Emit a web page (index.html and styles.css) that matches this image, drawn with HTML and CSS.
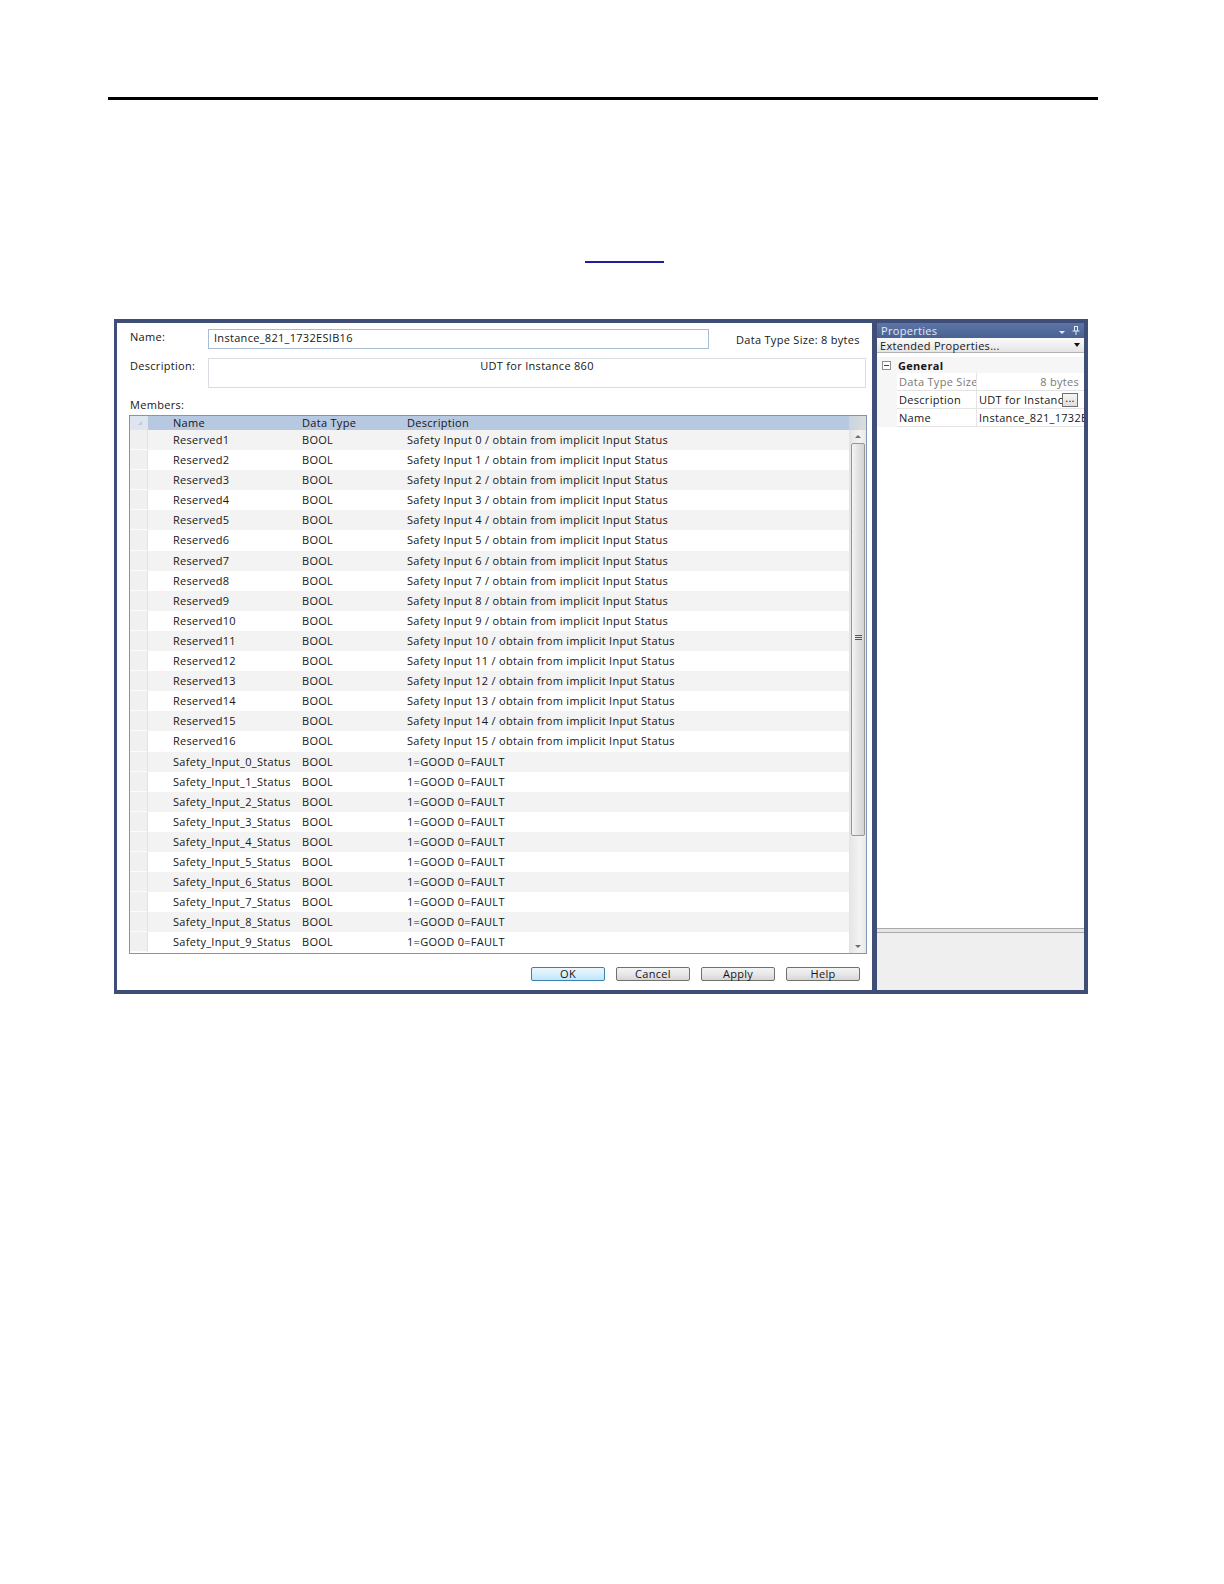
FILE: index.html
```html
<!DOCTYPE html>
<html lang="en">
<head>
    <meta charset="UTF-8">
    <title>Data Type: Instance_821_1732ESIB16</title>
    <link rel="stylesheet" href="styles.css">
</head>
<body>

<div class="top-rule"></div>
<a class="xref" href="#"></a>

<div class="dialog">
    <div class="editor">
        <div class="field-row name-row">
            <label class="field-label">Name:</label>
            <div class="text-box name-box">Instance_821_1732ESIB16</div>
            <span class="type-size">Data Type Size: 8 bytes</span>
        </div>

        <div class="field-row desc-row">
            <label class="field-label">Description:</label>
            <div class="text-box desc-box">UDT for Instance 860</div>
        </div>

        <div class="members-label">Members:</div>

        <div class="members">
            <div class="members-head">
                <div class="row-head"><span class="sort-mark"></span></div>
                <div class="col-name">Name</div>
                <div class="col-type">Data Type</div>
                <div class="col-desc">Description</div>
                <div class="head-corner"></div>
            </div>
            <div class="members-body">
                <div class="rows">
                    <div class="row"><div class="row-head"></div><div class="col-name">Reserved1</div><div class="col-type">BOOL</div><div class="col-desc">Safety Input 0 / obtain from implicit Input Status</div></div>
                    <div class="row"><div class="row-head"></div><div class="col-name">Reserved2</div><div class="col-type">BOOL</div><div class="col-desc">Safety Input 1 / obtain from implicit Input Status</div></div>
                    <div class="row"><div class="row-head"></div><div class="col-name">Reserved3</div><div class="col-type">BOOL</div><div class="col-desc">Safety Input 2 / obtain from implicit Input Status</div></div>
                    <div class="row"><div class="row-head"></div><div class="col-name">Reserved4</div><div class="col-type">BOOL</div><div class="col-desc">Safety Input 3 / obtain from implicit Input Status</div></div>
                    <div class="row"><div class="row-head"></div><div class="col-name">Reserved5</div><div class="col-type">BOOL</div><div class="col-desc">Safety Input 4 / obtain from implicit Input Status</div></div>
                    <div class="row"><div class="row-head"></div><div class="col-name">Reserved6</div><div class="col-type">BOOL</div><div class="col-desc">Safety Input 5 / obtain from implicit Input Status</div></div>
                    <div class="row"><div class="row-head"></div><div class="col-name">Reserved7</div><div class="col-type">BOOL</div><div class="col-desc">Safety Input 6 / obtain from implicit Input Status</div></div>
                    <div class="row"><div class="row-head"></div><div class="col-name">Reserved8</div><div class="col-type">BOOL</div><div class="col-desc">Safety Input 7 / obtain from implicit Input Status</div></div>
                    <div class="row"><div class="row-head"></div><div class="col-name">Reserved9</div><div class="col-type">BOOL</div><div class="col-desc">Safety Input 8 / obtain from implicit Input Status</div></div>
                    <div class="row"><div class="row-head"></div><div class="col-name">Reserved10</div><div class="col-type">BOOL</div><div class="col-desc">Safety Input 9 / obtain from implicit Input Status</div></div>
                    <div class="row"><div class="row-head"></div><div class="col-name">Reserved11</div><div class="col-type">BOOL</div><div class="col-desc">Safety Input 10 / obtain from implicit Input Status</div></div>
                    <div class="row"><div class="row-head"></div><div class="col-name">Reserved12</div><div class="col-type">BOOL</div><div class="col-desc">Safety Input 11 / obtain from implicit Input Status</div></div>
                    <div class="row"><div class="row-head"></div><div class="col-name">Reserved13</div><div class="col-type">BOOL</div><div class="col-desc">Safety Input 12 / obtain from implicit Input Status</div></div>
                    <div class="row"><div class="row-head"></div><div class="col-name">Reserved14</div><div class="col-type">BOOL</div><div class="col-desc">Safety Input 13 / obtain from implicit Input Status</div></div>
                    <div class="row"><div class="row-head"></div><div class="col-name">Reserved15</div><div class="col-type">BOOL</div><div class="col-desc">Safety Input 14 / obtain from implicit Input Status</div></div>
                    <div class="row"><div class="row-head"></div><div class="col-name">Reserved16</div><div class="col-type">BOOL</div><div class="col-desc">Safety Input 15 / obtain from implicit Input Status</div></div>
                    <div class="row"><div class="row-head"></div><div class="col-name">Safety_Input_0_Status</div><div class="col-type">BOOL</div><div class="col-desc">1=GOOD 0=FAULT</div></div>
                    <div class="row"><div class="row-head"></div><div class="col-name">Safety_Input_1_Status</div><div class="col-type">BOOL</div><div class="col-desc">1=GOOD 0=FAULT</div></div>
                    <div class="row"><div class="row-head"></div><div class="col-name">Safety_Input_2_Status</div><div class="col-type">BOOL</div><div class="col-desc">1=GOOD 0=FAULT</div></div>
                    <div class="row"><div class="row-head"></div><div class="col-name">Safety_Input_3_Status</div><div class="col-type">BOOL</div><div class="col-desc">1=GOOD 0=FAULT</div></div>
                    <div class="row"><div class="row-head"></div><div class="col-name">Safety_Input_4_Status</div><div class="col-type">BOOL</div><div class="col-desc">1=GOOD 0=FAULT</div></div>
                    <div class="row"><div class="row-head"></div><div class="col-name">Safety_Input_5_Status</div><div class="col-type">BOOL</div><div class="col-desc">1=GOOD 0=FAULT</div></div>
                    <div class="row"><div class="row-head"></div><div class="col-name">Safety_Input_6_Status</div><div class="col-type">BOOL</div><div class="col-desc">1=GOOD 0=FAULT</div></div>
                    <div class="row"><div class="row-head"></div><div class="col-name">Safety_Input_7_Status</div><div class="col-type">BOOL</div><div class="col-desc">1=GOOD 0=FAULT</div></div>
                    <div class="row"><div class="row-head"></div><div class="col-name">Safety_Input_8_Status</div><div class="col-type">BOOL</div><div class="col-desc">1=GOOD 0=FAULT</div></div>
                    <div class="row"><div class="row-head"></div><div class="col-name">Safety_Input_9_Status</div><div class="col-type">BOOL</div><div class="col-desc">1=GOOD 0=FAULT</div></div>
                </div>
                <div class="vscroll">
                    <div class="scroll-arrow up"></div>
                    <div class="scroll-thumb"><span class="grip"></span></div>
                    <div class="scroll-track"></div>
                    <div class="scroll-arrow down"></div>
                </div>
            </div>
        </div>

        <div class="buttons">
            <button class="btn default">OK</button>
            <button class="btn">Cancel</button>
            <button class="btn">Apply</button>
            <button class="btn">Help</button>
        </div>
    </div>

    <div class="splitter"></div>

    <div class="props">
        <div class="props-title">
            <span>Properties</span>
            <span class="title-tools">
                <span class="menu-arrow"></span>
                <svg class="pin" width="8" height="9" viewBox="0 0 8 9">
                    <path d="M2 0.5h4M2.5 0.5v4.5M5.5 0.5v4.5M0.5 5h7M4 5v4" fill="none" stroke="#e6ecf6" stroke-width="1"/>
                </svg>
            </span>
        </div>
        <div class="props-combo">
            <span>Extended Properties...</span>
            <span class="combo-arrow"></span>
        </div>
        <div class="props-grid">
            <div class="prop-category"><span class="expander"></span>General</div>
            <div class="prop-row readonly"><div class="prop-name">Data Type Size</div><div class="prop-value right">8 bytes</div></div>
            <div class="prop-row"><div class="prop-name">Description</div><div class="prop-value"><span class="clip">UDT for Instance 860</span><span class="ellipsis-btn">...</span></div></div>
            <div class="prop-row"><div class="prop-name">Name</div><div class="prop-value"><span class="clip">Instance_821_1732ESIB16</span></div></div>
        </div>
        <div class="props-help"></div>
    </div>
</div>

</body>
</html>
```

FILE: styles.css
```css
/* page */
body {
    margin: 0;
    background: #fff;
    font-family: "Open Sans", "Noto Sans", sans-serif;
    font-size: 11px;
    letter-spacing: 0.3px;
    color: #161616;
}
.top-rule {
    margin: 97px 0 0 108px;
    width: 990px;
    height: 3px;
    background: #000;
}
.xref {
    display: block;
    margin: 161px 0 0 585px;
    width: 79px;
    height: 2px;
    background: #1f1f9c;
}

/* dialog frame */
.dialog {
    display: flex;
    box-sizing: border-box;
    margin: 56px 0 0 114px;
    width: 974px;
    height: 675px;
    border: 4px solid #3e4e76;
    border-left-width: 3px;
}
.editor {
    width: 755px;
    padding: 0 6px 0 12px;
    box-sizing: border-box;
    background: #fff;
}
.splitter {
    width: 5px;
    background: #3e4e76;
}

/* name / description */
.field-row {
    display: flex;
    align-items: flex-start;
}
.name-row {
    margin-top: 6px;
    height: 20px;
}
.desc-row {
    margin-top: 9px;
    height: 30px;
}
.field-label {
    width: 78px;
    padding-left: 1px;
    line-height: 14px;
}
.name-row .field-label {
    margin-top: 1px;
}
.desc-row .field-label {
    margin-top: 1px;
}
.text-box {
    box-sizing: border-box;
    background: #fff;
}
.name-box {
    width: 501px;
    height: 20px;
    border: 1px solid #a9bcd5;
    padding-left: 5px;
    line-height: 15px;
}
.type-size {
    margin-left: 27px;
    padding-top: 1px;
    line-height: 20px;
}
.desc-box {
    width: 658px;
    height: 30px;
    border: 1px solid #d9dde3;
    padding-top: 0;
    text-align: center;
    line-height: 14px;
}
.members-label {
    margin-top: 10px;
    padding-left: 1px;
    line-height: 14px;
}

/* members grid */
.members {
    margin-top: 3px;
    width: 736px;
    border: 1px solid #8195b3;
}
.members-head {
    display: flex;
    height: 14px;
    line-height: 13px;
    background: #b7c9e1;
}
.members-body {
    display: flex;
    height: 523px;
    overflow: hidden;
}
.rows {
    flex: 1;
}
.row {
    display: flex;
    height: 20.1px;
    line-height: 20px;
    background: #fff;
}
.row:nth-child(odd) {
    background: #f3f3f3;
}
.row-head {
    position: relative;
    width: 18px;
    flex: none;
    background: #f0f0f0;
    border-bottom: 1px solid #fbfbfb;
    border-right: 1px solid #e2e2e2;
    box-sizing: border-box;
}
.members-head .row-head {
    background: #dfe5ee;
    border-bottom: none;
}
.sort-mark {
    position: absolute;
    left: 8px;
    top: 5px;
    width: 0;
    height: 0;
    border-left: 4px solid transparent;
    border-bottom: 4px solid #c3c8cf;
}
.col-name {
    width: 151px;
    padding-left: 25px;
    box-sizing: border-box;
    white-space: nowrap;
}
.col-type {
    width: 104px;
    padding-left: 3px;
    box-sizing: border-box;
}
.col-desc {
    flex: 1;
    padding-left: 4px;
    white-space: nowrap;
}
.head-corner {
    width: 17px;
    background: linear-gradient(to right, #c9d3e0, #dcdcdc);
}

/* scroll bar */
.vscroll {
    display: flex;
    flex-direction: column;
    width: 17px;
    background: linear-gradient(to right, #e6e6e6, #f3f3f3 60%, #e9e9e9);
    border-left: 1px solid #e4e4e4;
    box-sizing: border-box;
}
.scroll-arrow {
    position: relative;
    height: 13px;
}
.scroll-arrow::after {
    content: "";
    position: absolute;
    left: 5px;
    width: 0;
    height: 0;
    border-left: 3px solid transparent;
    border-right: 3px solid transparent;
}
.scroll-arrow.up::after {
    top: 5px;
    border-bottom: 3px solid #6d6d6d;
}
.scroll-arrow.down::after {
    top: 5px;
    border-top: 3px solid #6d6d6d;
}
.scroll-thumb {
    position: relative;
    height: 391px;
    margin: 0 1px;
    border: 1px solid #979797;
    border-radius: 2px;
    background: linear-gradient(to right, #f4f4f4, #e3e3e3 50%, #d4d4d4);
}
.grip {
    position: absolute;
    left: 3px;
    top: 191px;
    width: 7px;
    height: 5px;
    border-top: 1px solid #555;
    border-bottom: 1px solid #555;
    box-sizing: border-box;
}
.grip::after {
    content: "";
    position: absolute;
    left: 0;
    right: 0;
    top: 1px;
    height: 1px;
    background: #555;
}
.scroll-track {
    flex: 1;
}

/* buttons */
.buttons {
    display: flex;
    justify-content: flex-end;
    gap: 11px;
    margin-top: 13px;
    margin-right: 6px;
}
.btn {
    width: 74px;
    height: 14px;
    padding: 0;
    font-family: inherit;
    font-size: 11px;
    letter-spacing: 0.3px;
    line-height: 12px;
    color: #161616;
    border: 1px solid #707070;
    border-radius: 2px;
    background: linear-gradient(#f3f3f3, #e8e8e8 50%, #d6d6d6);
}
.btn.default {
    border-color: #3c7fb1;
    background: linear-gradient(#eaf6fd, #d9f0fc 50%, #bee6fd);
}

/* properties pane */
.props {
    flex: 1;
    display: flex;
    flex-direction: column;
    background: #e6e6e6;
    overflow: hidden;
}
.props-title {
    display: flex;
    justify-content: space-between;
    align-items: center;
    height: 15px;
    padding: 0 4px;
    color: #e3e9f4;
    background: linear-gradient(#5c75a6, #4a6292);
}
.title-tools {
    display: flex;
    align-items: center;
    gap: 7px;
}
.menu-arrow {
    width: 0;
    height: 0;
    margin-top: 3px;
    border-left: 3px solid transparent;
    border-right: 3px solid transparent;
    border-top: 3px solid #e6ecf6;
}
.props-combo {
    display: flex;
    justify-content: space-between;
    align-items: center;
    height: 14px;
    padding: 0 4px 0 3px;
    border-bottom: 1px solid #b3b3b3;
    background: linear-gradient(#fbfbfb, #e4e4e4);
    color: #161616;
}
.combo-arrow {
    width: 0;
    height: 0;
    border-left: 3px solid transparent;
    border-right: 3px solid transparent;
    border-top: 4px solid #111;
}
.props-grid {
    flex: 1;
    padding-top: 4px;
    background: #fff;
    border-bottom: 1px solid #a9a9a9;
}
.prop-category {
    display: flex;
    align-items: center;
    height: 16px;
    padding-left: 5px;
    font-weight: bold;
    background: #f6f6f6;
}
.expander {
    position: relative;
    width: 9px;
    height: 9px;
    margin-right: 7px;
    border: 1px solid #8f8f8f;
    box-sizing: border-box;
    background: #fff;
}
.expander::after {
    content: "";
    position: absolute;
    left: 1px;
    right: 1px;
    top: 3px;
    height: 1px;
    background: #444;
}
.prop-row {
    display: flex;
    height: 18px;
    line-height: 17px;
    border-left: 20px solid #f6f6f6;
}
.prop-name {
    width: 80px;
    padding-left: 2px;
    box-sizing: border-box;
    border-right: 1px solid #e4e4e4;
    border-bottom: 1px solid #e4e4e4;
    white-space: nowrap;
    overflow: hidden;
}
.prop-value {
    flex: 1;
    display: flex;
    padding-left: 2px;
    border-bottom: 1px solid #e4e4e4;
    white-space: nowrap;
    overflow: hidden;
}
.prop-value.right {
    justify-content: flex-end;
    padding-right: 5px;
}
.readonly {
    color: #7a7a7a;
}
.clip {
    flex: 1;
    min-width: 0;
    overflow: hidden;
}
.ellipsis-btn {
    flex: none;
    width: 14px;
    height: 12px;
    margin: 2px 6px 0 0;
    line-height: 8px;
    text-align: center;
    border: 1px solid #707070;
    background: linear-gradient(#f6f6f6, #dedede);
}
.props-help {
    height: 57px;
    margin-top: 3px;
    border-top: 1px solid #a9a9a9;
    background: #efefef;
}
```
